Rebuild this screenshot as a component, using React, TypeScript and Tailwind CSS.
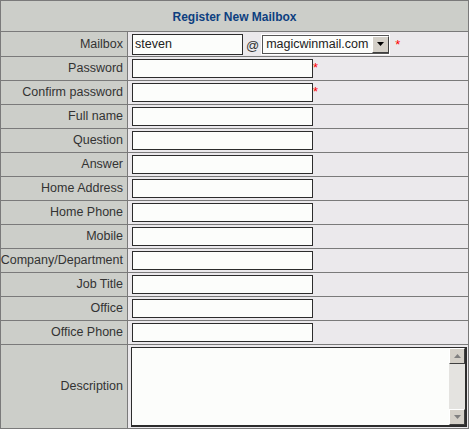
const fields = [
  { label: 'Password', star: true },
  { label: 'Confirm password', star: true },
  { label: 'Full name' },
  { label: 'Question' },
  { label: 'Answer' },
  { label: 'Home Address' },
  { label: 'Home Phone' },
  { label: 'Mobile' },
  { label: 'Company/Department' },
  { label: 'Job Title' },
  { label: 'Office' },
  { label: 'Office Phone' },
]

const Label = ({ children }: { children: React.ReactNode }) => (
  <div className="bg-[#cccec9] flex items-center justify-end pr-[4px] text-[12.5px] text-[#333333]">
    {children}
  </div>
)

const Star = ({ className = '' }: { className?: string }) => (
  <span className={`text-[#ff0000] text-[13px] leading-none ${className}`}>*</span>
)

/**
 * Register new mailbox form
 */
const App = () => {
  return (
    <div className="w-[469px] h-[429px] font-['Liberation_Sans',Arial,sans-serif]">
      <div className="grid grid-cols-[126px_1fr] grid-rows-[30px_24px_repeat(12,23px)_83px] gap-px bg-[#7a7a7a] border border-[#7a7a7a]">
        <div className="col-span-2 bg-[#cccec9] flex items-center justify-center pt-px text-[12px] font-bold text-[#0d3f80]">
          Register New Mailbox
        </div>

        <Label>Mailbox</Label>
        <div className="bg-[#ebe9ec] flex items-center pl-[4px]">
          <input
            defaultValue="steven"
            className="w-[111px] h-[21px] border border-[#2c2c2c] bg-[#fcfdfb] px-[2px] text-[12.5px] text-[#222] outline-none"
          />
          <span className="ml-[3px] mr-[2px] mt-[4px] text-[13px] text-[#333]">@</span>
          <div className="flex w-[129px] h-[21px] border border-white bg-[#fcfdfb]">
            <div className="flex flex-1 border border-[#555] border-r-0">
              <span className="flex-1 pl-[3px] text-[12.5px] leading-[17px] text-[#222] overflow-hidden whitespace-nowrap">magicwinmail.com</span>
              <div className="w-[17px] h-[17px] bg-[#d4d0c8] border border-t-white border-l-white border-r-[#404040] border-b-[#404040] flex items-center justify-center">
                <svg width="7" height="4" viewBox="0 0 7 4">
                  <path d="M0 0h7L3.5 4z" fill="#000" />
                </svg>
              </div>
            </div>
          </div>
          <Star className="ml-[5px]" />
        </div>

        {fields.map((f) => (
          <div key={f.label} className="contents">
            <Label>{f.label}</Label>
            <div className="bg-[#ebe9ec] flex items-start pl-[4px] pt-[2px]">
              <input className="w-[181px] h-[19px] border border-[#2c2c2c] bg-[#fcfdfb] outline-none" />
              {f.star && <Star className="mt-[2px]" />}
            </div>
          </div>
        ))}

        <Label>Description</Label>
        <div className="bg-[#ebe9ec] pl-[3px] pr-px pt-[2px] pb-px">
          <div className="flex h-[80px] border border-[#2c2c2c] border-r-2 border-b-2 bg-[#fcfdfb]">
            <textarea className="flex-1 resize-none outline-none bg-transparent" />
            <div className="w-[16px] flex flex-col bg-[#e4e3e0]">
              <div className="h-[16px] bg-[#d4d0c8] border border-t-white border-l-white border-r-[#404040] border-b-[#404040] flex items-center justify-center">
                <svg width="7" height="4" viewBox="0 0 7 4">
                  <path d="M0 4h7L3.5 0z" fill="#808080" />
                </svg>
              </div>
              <div className="flex-1" />
              <div className="h-[16px] bg-[#d4d0c8] border border-t-white border-l-white border-r-[#404040] border-b-[#404040] flex items-center justify-center">
                <svg width="7" height="4" viewBox="0 0 7 4">
                  <path d="M0 0h7L3.5 4z" fill="#808080" />
                </svg>
              </div>
            </div>
          </div>
        </div>
      </div>
    </div>
  )
}

export default App
